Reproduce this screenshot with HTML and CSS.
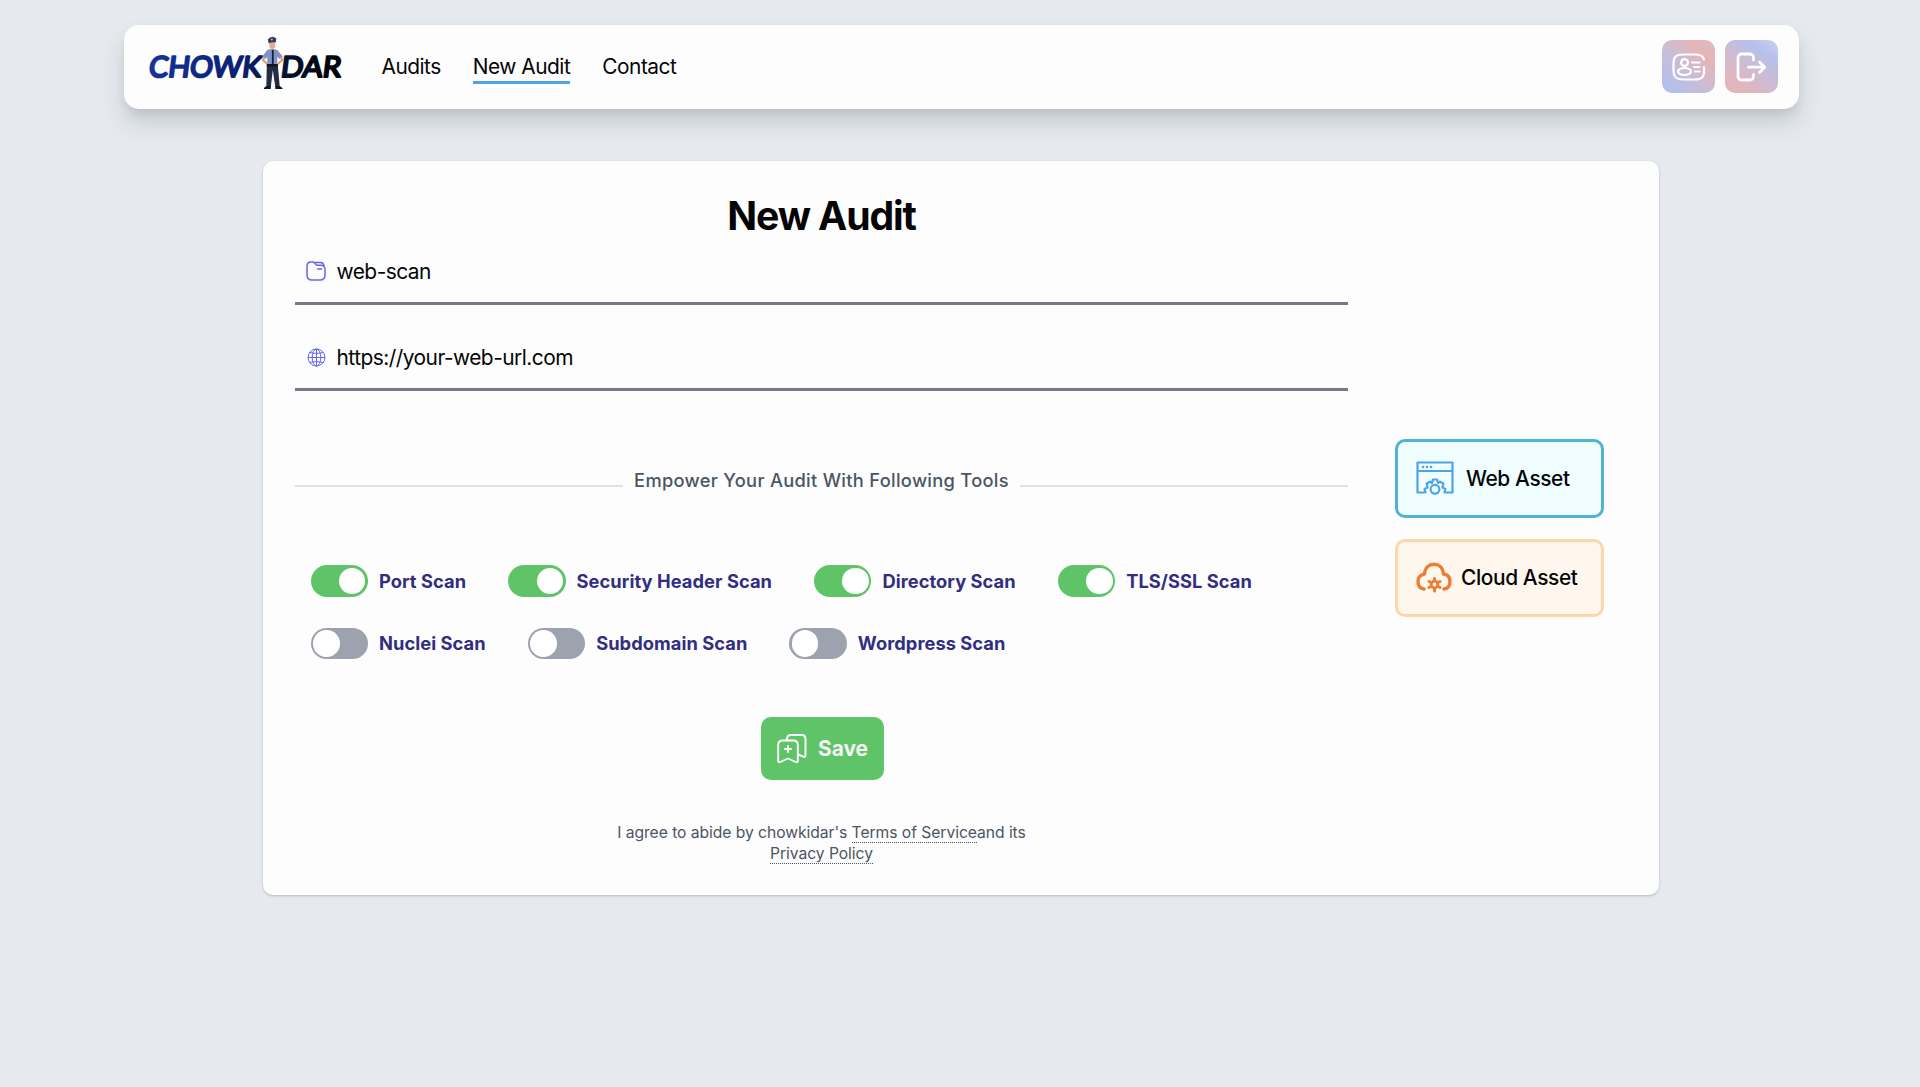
FILE: index.html
```html
<!DOCTYPE html>
<html lang="en">
<head>
<meta charset="utf-8">
<title>Chowkidar - New Audit</title>
<link rel="stylesheet" href="styles.css">
</head>
<body>
<header class="navbar">
  <svg class="logo" width="196" height="56" viewBox="0 0 196 56" aria-label="Chowkidar">
    <defs>
      <linearGradient id="ink" gradientUnits="userSpaceOnUse" x1="0" y1="0" x2="196" y2="0">
        <stop offset="0" stop-color="#15349b"/><stop offset=".45" stop-color="#0a2272"/><stop offset=".75" stop-color="#061029"/><stop offset="1" stop-color="#000"/>
      </linearGradient>
    </defs>
    <g class="logo-text" fill="url(#ink)" stroke="url(#ink)" transform="translate(4 0) skewX(-7)">
      <text x="1" y="40" textLength="112" lengthAdjust="spacingAndGlyphs">CHOWK</text>
      <text x="133" y="40" textLength="60" lengthAdjust="spacingAndGlyphs">DAR</text>
    </g>
    <g transform="translate(1.300 -1)">
      <path d="M117.500 29l-.5 22h4.500l2-17 2.500 17h4.500l-2-22z" fill="#222c42"/>
      <path d="M114.500 53q0-2 3.500-3h3.500v3zM126 50h4.500q3 2 3 3H126z" fill="#11151f"/>
      <path d="M118 14q5-2 10 0l5.500 6.500-3 2.500-2.500-2v8h-10v-8l-2 2-3-2.500z" fill="#7f94c4"/>
      <path d="M115 22l-1.500 2 4.500 4M132 22l1 2-4.500 4" fill="none" stroke="#d99c77" stroke-width="2" stroke-linecap="round" stroke-linejoin="round"/>
      <path d="M123.500 14v14" stroke="#18223c" stroke-width="1.800"/>
      <path d="M117.500 28h11v2.500h-11z" fill="#11151f"/>
      <ellipse cx="123" cy="9" rx="3" ry="4" fill="#e5ad8c"/>
      <path d="M118.500 3.500q4-5 8.500-1l-.5 4q-4-1-7 1z" fill="#303e60"/>
      <circle cx="122.500" cy="3.500" r="1" fill="#aab3c8"/>
    </g>
  </svg>
  <nav class="links">
    <a class="link">Audits</a>
    <a class="link active">New Audit</a>
    <a class="link">Contact</a>
  </nav>
  <div class="actions">
    <button class="icon-btn profile" aria-label="Profile">
      <svg width="34" height="28" viewBox="0 0 34 28" fill="none" stroke="#fff" stroke-width="2.200" stroke-linecap="round">
        <path d="M32 6.500C31 2.500 28 1.500 23 1.500H11C4 1.500 1.500 4 1.500 10v8c0 6 2.500 8.500 9.500 8.500h12c7 0 9-2.500 9-8.500v-4M20 9.500h7.500M22 14h5.500M23 18.500h4.500"/>
        <circle cx="12.500" cy="9.500" r="3.400"/><ellipse cx="12.500" cy="18.500" rx="6.500" ry="3.500"/>
      </svg>
    </button>
    <button class="icon-btn logout" aria-label="Log out">
      <svg width="31" height="30" viewBox="0 0 31 30" fill="none" stroke="#fff" stroke-width="2.800" stroke-linecap="round" stroke-linejoin="round">
        <path d="M17.500 8V6q0-4-4-4H6Q2 2 2 6v18q0 4 4 4h7.500q4 0 4-4v-1.500M12.500 15.200h16M23.500 10l5.200 5.200-5.200 5.200"/>
      </svg>
    </button>
  </div>
</header>
<main class="card">
  <form class="form">
    <h1 class="title">New Audit</h1>
    <label class="field">
      <svg width="20" height="20" viewBox="0 0 20 20" fill="none" stroke="#6366f1" stroke-width="1.500" stroke-linecap="round" stroke-linejoin="round">
        <path d="M1 5.500Q1 1 5 1h1.500q1.500 0 2.300 1.100l1.100 1.400q.6.700 1.600.7H15q4 .3 4 4.300V14q0 5-5 5H6q-5 0-5-5zM7.500 1.600h7q3 .3 3.500 3M11.500 8h4"/>
      </svg>
      <span>web-scan</span>
    </label>
    <label class="field">
      <svg width="20" height="20" viewBox="0 0 20 20" fill="none" stroke="#6366f1">
        <circle cx="10.500" cy="10.500" r="8.500"/><ellipse cx="10.500" cy="10.500" rx="4.300" ry="8.500"/><path d="M10.500 2v17M2 10.500h17M3.500 5.500q7 2 14 0M3.500 15.500q7-2 14 0"/>
      </svg>
      <span>https://your-web-url.com</span>
    </label>
    <div class="divider"><span>Empower Your Audit With Following Tools</span></div>
    <div class="tools">
      <div class="row">
        <label class="tool"><i class="switch on"></i><span>Port Scan</span></label>
        <label class="tool"><i class="switch on"></i><span>Security Header Scan</span></label>
        <label class="tool"><i class="switch on"></i><span>Directory Scan</span></label>
        <label class="tool"><i class="switch on"></i><span>TLS/SSL Scan</span></label>
      </div>
      <div class="row">
        <label class="tool"><i class="switch"></i><span>Nuclei Scan</span></label>
        <label class="tool"><i class="switch"></i><span>Subdomain Scan</span></label>
        <label class="tool"><i class="switch"></i><span>Wordpress Scan</span></label>
      </div>
    </div>
    <button class="save" type="button">
      <svg width="30" height="30" viewBox="0 0 30 30" fill="none" stroke="#fff" stroke-width="1.900" stroke-linecap="round" stroke-linejoin="round">
        <path d="M1.200 11q0-4.500 4.500-4.500h10.600q4.500 0 4.500 4.500v16q0 2-2 1L11 24.500 3.200 28q-2 1-2-1z"/>
        <path d="M10 6.200V5q0-4 4-4h10.500q4 0 4 4v16.500q0 2-2 1.200L21 20.500M11 12v6M8 15h6"/>
      </svg>
      <span>Save</span>
    </button>
    <p class="terms">I agree to abide by chowkidar's <a>Terms of Service</a>and its<br><a>Privacy Policy</a></p>
  </form>
  <aside class="assets">
    <button class="asset web">
      <svg width="38" height="34" viewBox="0 0 38 34" fill="none" stroke="#4da3e8" stroke-width="2.200" stroke-linejoin="round" stroke-linecap="round">
        <path d="M8 31.500H1.500V1.500h35v30H30M1.500 10h35"/>
        <path d="M9.500 31.500l-1-3.500 3-1.500-.8-4 3.300-1.800 2 1.300 1-3.500h4l1 3.500 2-1.300 3.300 1.800-.8 4 3 1.500-1 3.500"/>
        <circle cx="19" cy="28.300" r="4.400"/><path d="M7 6h.1M11 6h.1M15 6h.1" stroke-width="2.500"/>
      </svg>
      <span>Web Asset</span>
    </button>
    <button class="asset cloud">
      <svg width="36" height="32" viewBox="0 0 36 32" fill="none" stroke="#ed7d31" stroke-width="3.400" stroke-linecap="round" stroke-linejoin="round">
        <path d="M8 27C4 26.500 2 23.500 2 19.500 2 15 5 12.500 8.500 12 9 5.500 13 2.200 18 2.200S27 5.500 27.500 12c4 .5 6.500 3 6.500 7.500 0 4-2 7-6 7.500"/>
        <circle cx="18.500" cy="22.500" r="3.300" stroke-width="2.800"/><path d="M18.500 16.500v2M18.500 26.500v2.500M13 19.500l2 1M24 19.500l-2 1M13 25.500l2-1M24 25.500l-2-1" stroke-width="3"/>
      </svg>
      <span>Cloud Asset</span>
    </button>
  </aside>
</main>
</body>
</html>
```
FILE: styles.css
```css
* { box-sizing: border-box; }
body {
  margin: 0;
  min-height: 1087px;
  padding: 25px 121px 0 124px;
  background: #e6eaef;
  color: #050505;
  font-family: Inter, sans-serif;
  font-size: 20.900px;
  overflow: hidden;
}
button { font: inherit; color: inherit; cursor: pointer; }
svg { display: block; flex: none; }

.navbar {
  display: flex;
  align-items: center;
  height: 83.500px;
  margin-right: .5px;
  padding: 0 20.500px 0 24px;
  border-radius: 15px;
  background: #fdfdfd;
  box-shadow: 0 14px 22px rgba(75, 85, 90, .2), 0 5px 8px -2px rgba(75, 85, 90, .12);
}
.logo { margin-top: -4px; overflow: visible; }
.logo-text { font: 400 29px Lato, sans-serif; stroke-width: 2.200px; stroke-linejoin: round; }
.links { display: flex; gap: 32px; margin-left: 37.500px; }
.link { height: 34px; line-height: 31px; padding-top: 1.500px; border-bottom: 3px solid transparent; letter-spacing: -.5px; }
.link.active { border-color: #4da4e6; }
.actions { display: flex; gap: 10px; margin-left: auto; }
.icon-btn { display: grid; place-items: center; width: 53px; height: 53px; padding: 0; border: 0; border-radius: 10px; }
.profile { background: linear-gradient(45deg, #acc0f2, #c9bdd8 45%, #e5b4b7 75%, #dcb9c5); }
.logout { background: linear-gradient(35deg, #eab3b0, #d5b9cc 40%, #b5c0eb 75%, #ccd1f0); }

.card {
  display: flex;
  width: 1396px;
  height: 734px;
  margin: 52.500px 0 0 139px;
  padding: 0 53px 0 32px;
  border-radius: 10px;
  background: #fdfdfd;
  box-shadow: 0 1px 3px rgba(0, 0, 0, .14), 0 1px 2px rgba(0, 0, 0, .08);
}
.form { width: 1053px; display: flex; flex-direction: column; align-items: center; }
.title { margin: 31px 0 0; font-size: 39.200px; line-height: 48px; font-weight: 700; letter-spacing: -1.120px; }
.field {
  display: flex;
  align-items: center;
  gap: 10.500px;
  width: 100%;
  height: 65px;
  padding: 0 0 0 11px;
  border-bottom: 3px solid #747a8b;
  letter-spacing: -.52px;
}
.field + .field { margin-top: 21px; }
.divider {
  display: flex;
  align-items: center;
  gap: 11px;
  width: 100%;
  margin-top: 76px;
  color: #4b5563;
  font-size: 18.300px;
  font-weight: 500;
  line-height: 26px;
  letter-spacing: .3px;
}
.divider::before, .divider::after { content: ""; flex: 1; height: 1.500px; margin-top: 12px; background: #dde2e7; }
.divider span { white-space: nowrap; }
.tools { width: 100%; margin-top: 72px; padding-left: 15.500px; }
.row { display: flex; gap: 42px; height: 31.500px; }
.row + .row { margin-top: 31px; }
.tool { display: flex; align-items: center; gap: 11px; color: #312e81; font-size: 18.300px; font-weight: 700; letter-spacing: .05px; white-space: nowrap; }
.switch { width: 57.500px; height: 31.500px; padding: 2.600px; border-radius: 16px; background: #9ca3af; }
.switch::before { content: ""; display: block; width: 26.500px; height: 26.500px; border-radius: 50%; background: #fff; }
.switch.on { background: #5fc468; }
.switch.on::before { margin-left: auto; }
.save {
  display: flex;
  align-items: center;
  gap: 11px;
  width: 123px;
  height: 63px;
  margin: 58px 0 0 1px;
  padding: 0 0 0 16.500px;
  border: 0;
  border-radius: 10px;
  background: #5fc468;
  color: #f3f4f6;
  font-weight: 700;
}
.terms { margin: 42px 0 0; color: #4b5563; font-size: 15.670px; line-height: 21px; text-align: center; letter-spacing: -.05px; }
.terms a { border-bottom: 1.300px dotted #4b5563; }

.assets { display: flex; flex-direction: column; gap: 21px; margin: 278px 0 0 47px; }
.asset { display: flex; align-items: center; width: 209px; height: 78.500px; padding: 0 0 0 17.500px; border: 3px solid; border-radius: 10px; font-weight: 500; letter-spacing: -.4px; white-space: nowrap; }
.asset span { color: #050505; }
.web { gap: 12.500px; border-color: #4fb3d1; background: #effdff; }
.cloud { gap: 9.500px; border-color: #fbd7aa; background: #fff7ee; }
```
